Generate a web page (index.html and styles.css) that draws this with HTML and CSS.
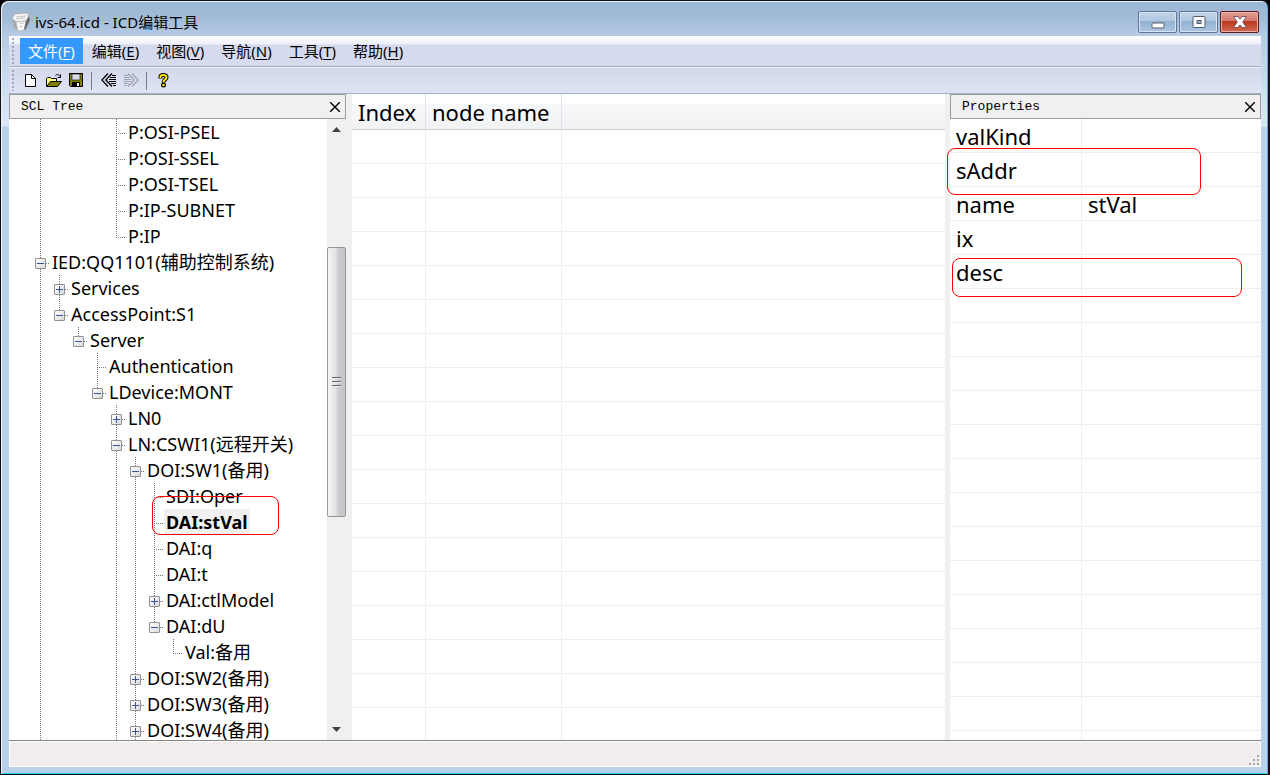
FILE: index.html
```
<!DOCTYPE html>
<html lang="zh-CN">
<head>
<meta charset="utf-8">
<title>ivs-64.icd - ICD编辑工具</title>
<link rel="stylesheet" href="styles.css">
</head>
<body>
<div class="window">
  <header class="titlebar">
    <svg class="app-icon" width="20" height="20" viewBox="0 0 20 20" aria-hidden="true">
      <path d="M1 6 7 10 7 19 3 16Z" fill="#a9a9a9"/>
      <path d="M1 6 4 2 16 1 18 4 15 9 5 10Z" fill="#f6f6f6" stroke="#aaa" stroke-width=".8"/>
      <path d="M5 10 15 9 13 18 7 19Z" fill="#fcfcfc" stroke="#bbb" stroke-width=".8"/>
      <path d="M15 9 18 4 19 8 15 17 13 18Z" fill="#6d6d6d"/>
      <path d="M5 5 15 4M5 7 14 6M8 12 13 11M8 15 12 14" stroke="#c4c4c4" fill="none"/>
    </svg>
    <h1 class="title">ivs-64.icd - ICD编辑工具</h1>
    <div class="window-buttons">
      <button class="wbtn" type="button" aria-label="最小化"><svg width="14" height="14" viewBox="0 0 14 14"><rect x="1" y="8" width="12" height="5" rx="1" fill="#fff" stroke="#555e6b"/></svg></button>
      <button class="wbtn" type="button" aria-label="最大化"><svg width="14" height="14" viewBox="0 0 14 14"><rect x="1" y="1.500" width="12" height="11" rx="1" fill="#fff" stroke="#555e6b"/><rect x="5" y="5.500" width="4" height="3" fill="#8fb3d6" stroke="#555e6b"/></svg></button>
      <button class="wbtn wbtn-close" type="button" aria-label="关闭"><svg width="14" height="14" viewBox="0 0 14 14"><path d="M.5 1.500H5L7 4 9 1.500H13.500L9.800 7 13.500 12.500H9L7 10 5 12.500H.5L4.200 7Z" fill="#fff" stroke="#6b4a4c" stroke-width=".9"/></svg></button>
    </div>
  </header>

  <div class="client">
    <nav class="menubar">
      <span class="grip"></span>
      <button class="menu menu-active" type="button">文件(<u>F</u>)</button>
      <button class="menu" type="button">编辑(<u>E</u>)</button>
      <button class="menu" type="button">视图(<u>V</u>)</button>
      <button class="menu" type="button">导航(<u>N</u>)</button>
      <button class="menu" type="button">工具(<u>T</u>)</button>
      <button class="menu" type="button">帮助(<u>H</u>)</button>
    </nav>
    <div class="toolbar">
      <span class="grip"></span>
      <button class="tool" type="button" aria-label="新建"><svg width="16" height="16" viewBox="0 0 16 16"><path d="M2.500 1.500H8.500L12.500 5.500V13.500H2.500Z" fill="#fff" stroke="#000"/><path d="M8.500 1.500V5.500H12.500" fill="none" stroke="#000"/></svg></button>
      <button class="tool" type="button" aria-label="打开"><svg width="16" height="16" viewBox="0 0 16 16"><path d="M.5 13.500V5.500L1.500 4.500H4.500L5.500 5.500H10.500V8.500" fill="#ffff7a" stroke="#000"/><path d="M.5 13.500 4.500 8.500H15.500L11.500 13.500Z" fill="#808000" stroke="#000"/><path d="M9.500 2.500C11 1 12.500 1 14 3.500M14.500 1.500V4.500H11.500" fill="none" stroke="#000"/></svg></button>
      <button class="tool" type="button" aria-label="保存"><svg width="16" height="16" viewBox="0 0 16 16"><path d="M.5 .5H13.500V13.500H1.500L.5 12.500Z" fill="#808000" stroke="#000"/><path d="M3 1H11V7H3Z" fill="#d8dce6" stroke="#000" stroke-width=".6"/><path d="M3 9H11V14H3Z" fill="#000"/><path d="M8 10H10V13H8Z" fill="#fff"/></svg></button>
      <span class="separator"></span>
      <button class="tool" type="button" aria-label="后退"><svg width="16" height="16" viewBox="0 0 16 16"><path d="M7 .5 .8 7 7 13.500M11 .5 4.800 7 11 13.500" fill="none" stroke="#000" stroke-width="1.300"/><path d="M11 2.500H15M9 4.500H15M8 6.500H15M8 8.500H15M10 10.500H15M12 12.500H15" stroke="#000"/></svg></button>
      <button class="tool" type="button" aria-label="前进" disabled><svg width="16" height="16" viewBox="0 0 16 16"><path d="M8 .5 14.200 7 8 13.500M4 .5 10.200 7 4 13.500" fill="none" stroke="#a0a3ad" stroke-width="1.300"/><path d="M0 2.500H4M0 4.500H6M0 6.500H7M0 8.500H7M0 10.500H5M0 12.500H3" stroke="#a0a3ad"/></svg></button>
      <span class="separator"></span>
      <button class="tool" type="button" aria-label="帮助"><svg width="16" height="16" viewBox="0 0 16 16"><path d="M4.500 5.500V3.500C4.500 2 6 2 7.500 2S10.500 2.500 10.500 4.500C10.500 6.500 7.500 6.500 7.500 9.500" fill="none" stroke="#000" stroke-width="4"/><path d="M4.500 5V3.500C4.500 2 6 2 7.500 2S10.500 2.500 10.500 4.500C10.500 6.500 7.500 6.500 7.500 9" fill="none" stroke="#ffed00" stroke-width="2"/><circle cx="7.500" cy="12" r="2.500"/><circle cx="7.500" cy="12" r="1.300" fill="#ffed00"/></svg></button>
    </div>

    <main class="panes">
      <section class="pane tree-pane">
        <div class="pane-head"><h2 class="pane-title">SCL Tree</h2><button class="pane-close" type="button" aria-label="关闭"><svg width="10" height="10" viewBox="0 0 10 10"><path d="M0 0 10 10M10 0 0 10" stroke="#000" stroke-width="1.400"/></svg></button></div>
        <div class="tree-body">
          <ul class="tree">
            <li class="node"><i class="v"></i><i></i><i></i><i></i><i class="v h"></i><span class="label">P:OSI-PSEL</span></li>
            <li class="node"><i class="v"></i><i></i><i></i><i></i><i class="v h"></i><span class="label">P:OSI-SSEL</span></li>
            <li class="node"><i class="v"></i><i></i><i></i><i></i><i class="v h"></i><span class="label">P:OSI-TSEL</span></li>
            <li class="node"><i class="v"></i><i></i><i></i><i></i><i class="v h"></i><span class="label">P:IP-SUBNET</span></li>
            <li class="node"><i class="v"></i><i></i><i></i><i></i><i class="end h"></i><span class="label">P:IP</span></li>
            <li class="node"><i class="v h"><button class="box" type="button" aria-label="折叠"></button></i><span class="label">IED:QQ1101(辅助控制系统)</span></li>
            <li class="node"><i class="v"></i><i class="v h"><button class="box plus" type="button" aria-label="展开"></button></i><span class="label">Services</span></li>
            <li class="node"><i class="v"></i><i class="end h"><button class="box" type="button" aria-label="折叠"></button></i><span class="label">AccessPoint:S1</span></li>
            <li class="node"><i class="v"></i><i></i><i class="end h"><button class="box" type="button" aria-label="折叠"></button></i><span class="label">Server</span></li>
            <li class="node"><i class="v"></i><i></i><i></i><i class="v h"></i><span class="label">Authentication</span></li>
            <li class="node"><i class="v"></i><i></i><i></i><i class="end h"><button class="box" type="button" aria-label="折叠"></button></i><span class="label">LDevice:MONT</span></li>
            <li class="node"><i class="v"></i><i></i><i></i><i></i><i class="v h"><button class="box plus" type="button" aria-label="展开"></button></i><span class="label">LN0</span></li>
            <li class="node"><i class="v"></i><i></i><i></i><i></i><i class="v h"><button class="box" type="button" aria-label="折叠"></button></i><span class="label">LN:CSWI1(远程开关)</span></li>
            <li class="node"><i class="v"></i><i></i><i></i><i></i><i class="v"></i><i class="v h"><button class="box" type="button" aria-label="折叠"></button></i><span class="label">DOI:SW1(备用)</span></li>
            <li class="node"><i class="v"></i><i></i><i></i><i></i><i class="v"></i><i class="v"></i><i class="v h"></i><span class="label">SDI:Oper</span></li>
            <li class="node"><i class="v"></i><i></i><i></i><i></i><i class="v"></i><i class="v"></i><i class="v h"></i><span class="label selected">DAI:stVal</span><span class="mark mark-node"></span></li>
            <li class="node"><i class="v"></i><i></i><i></i><i></i><i class="v"></i><i class="v"></i><i class="v h"></i><span class="label">DAI:q</span></li>
            <li class="node"><i class="v"></i><i></i><i></i><i></i><i class="v"></i><i class="v"></i><i class="v h"></i><span class="label">DAI:t</span></li>
            <li class="node"><i class="v"></i><i></i><i></i><i></i><i class="v"></i><i class="v"></i><i class="v h"><button class="box plus" type="button" aria-label="展开"></button></i><span class="label">DAI:ctlModel</span></li>
            <li class="node"><i class="v"></i><i></i><i></i><i></i><i class="v"></i><i class="v"></i><i class="end h"><button class="box" type="button" aria-label="折叠"></button></i><span class="label">DAI:dU</span></li>
            <li class="node"><i class="v"></i><i></i><i></i><i></i><i class="v"></i><i class="v"></i><i></i><i class="end h"></i><span class="label">Val:备用</span></li>
            <li class="node"><i class="v"></i><i></i><i></i><i></i><i class="v"></i><i class="v h"><button class="box plus" type="button" aria-label="展开"></button></i><span class="label">DOI:SW2(备用)</span></li>
            <li class="node"><i class="v"></i><i></i><i></i><i></i><i class="v"></i><i class="v h"><button class="box plus" type="button" aria-label="展开"></button></i><span class="label">DOI:SW3(备用)</span></li>
            <li class="node"><i class="v"></i><i></i><i></i><i></i><i class="v"></i><i class="v h"><button class="box plus" type="button" aria-label="展开"></button></i><span class="label">DOI:SW4(备用)</span></li>
          </ul>
          <div class="scrollbar">
            <button class="arrow" type="button" aria-label="向上滚动"><svg width="9" height="5" viewBox="0 0 9 5"><path d="M0 5 4.500 0 9 5Z" fill="#444"/></svg></button>
            <div class="track"><div class="thumb"><span class="ridges"></span></div></div>
            <button class="arrow" type="button" aria-label="向下滚动"><svg width="9" height="5" viewBox="0 0 9 5"><path d="M0 0 4.500 5 9 0Z" fill="#444"/></svg></button>
          </div>
        </div>
      </section>

      <section class="pane list-pane">
        <table class="grid list">
          <colgroup><col class="col-index"><col class="col-node"><col></colgroup>
          <thead><tr><th scope="col">Index</th><th scope="col">node name</th><td></td></tr></thead>
          <tbody>
            <tr><td></td><td></td><td></td></tr><tr><td></td><td></td><td></td></tr>
            <tr><td></td><td></td><td></td></tr><tr><td></td><td></td><td></td></tr>
            <tr><td></td><td></td><td></td></tr><tr><td></td><td></td><td></td></tr>
            <tr><td></td><td></td><td></td></tr><tr><td></td><td></td><td></td></tr>
            <tr><td></td><td></td><td></td></tr><tr><td></td><td></td><td></td></tr>
            <tr><td></td><td></td><td></td></tr><tr><td></td><td></td><td></td></tr>
            <tr><td></td><td></td><td></td></tr><tr><td></td><td></td><td></td></tr>
            <tr><td></td><td></td><td></td></tr><tr><td></td><td></td><td></td></tr>
            <tr><td></td><td></td><td></td></tr><tr><td></td><td></td><td></td></tr>
          </tbody>
        </table>
      </section>

      <section class="pane props-pane">
        <div class="pane-head"><h2 class="pane-title">Properties</h2><button class="pane-close" type="button" aria-label="关闭"><svg width="10" height="10" viewBox="0 0 10 10"><path d="M0 0 10 10M10 0 0 10" stroke="#000" stroke-width="1.400"/></svg></button></div>
        <div class="props-body">
          <table class="grid props">
            <colgroup><col class="col-key"><col></colgroup>
            <tbody>
              <tr><th scope="row">valKind</th><td></td></tr>
              <tr><th scope="row">sAddr</th><td></td></tr>
              <tr><th scope="row">name</th><td>stVal</td></tr>
              <tr><th scope="row">ix</th><td></td></tr>
              <tr><th scope="row">desc</th><td></td></tr>
              <tr><td></td><td></td></tr><tr><td></td><td></td></tr>
              <tr><td></td><td></td></tr><tr><td></td><td></td></tr>
              <tr><td></td><td></td></tr><tr><td></td><td></td></tr>
              <tr><td></td><td></td></tr><tr><td></td><td></td></tr>
              <tr><td></td><td></td></tr><tr><td></td><td></td></tr>
              <tr><td></td><td></td></tr><tr><td></td><td></td></tr>
              <tr><td></td><td></td></tr><tr><td></td><td></td></tr>
            </tbody>
          </table>
        </div>
        <span class="mark mark-saddr"></span>
        <span class="mark mark-desc"></span>
      </section>
    </main>

    <footer class="statusbar">
      <svg width="12" height="12" viewBox="0 0 12 12" aria-hidden="true"><path d="M9 1h2v2H9zM5 5h2v2H5zM9 5h2v2H9zM1 9h2v2H1zM5 9h2v2H5zM9 9h2v2H9z" fill="#aaa"/></svg>
    </footer>
  </div>
</div>
</body>
</html>
```
FILE: styles.css
```
* { box-sizing: border-box; }

body {
  margin: 0;
  background: #000;
  color: #000;
  font-family: "Noto Sans", "Noto Sans CJK SC", sans-serif;
}

h1, h2, ul { margin: 0; padding: 0; font-weight: normal; }
button { padding: 0; border: 0; background: none; color: inherit; font: inherit; }
svg { display: block; }

.window {
  display: flex;
  flex-direction: column;
  height: 100vh;
  padding: 0 6px 7px 7px;
  border: 1px solid #111;
  border-width: 1px 2px 1px 1px;
  border-radius: 8px 8px 0 0;
  background: linear-gradient(#9ab5d2 0, #a3bcd8 18px, #b6cbe4 35px, #cfdff2 90px, #dbe7f6 125px, #b9d1ea 126px);
  box-shadow: inset 1px 1px #e8f2fb, inset -1px -1px #20cfe8;
}

.titlebar {
  display: flex;
  flex: none;
  align-items: center;
  height: 35px;
  padding: 6px 3px 0 3px;
  gap: 4px;
}
.title { flex: 1; font-size: 15px; line-height: 20px; }
.window-buttons { display: flex; align-self: flex-start; gap: 2px; padding-top: 4px; }
.wbtn {
  display: grid;
  place-items: center;
  width: 39px;
  height: 22px;
  border: 1px solid #5f7896;
  border-radius: 2px;
  background: linear-gradient(#c0d3e8 0, #b0c8e1 45%, #92b0d0 46%, #abc6e2 100%);
  box-shadow: inset 0 0 0 1px #d5e4f3;
}
.wbtn-close {
  border-color: #5c1a1c;
  background: linear-gradient(#e0a196 0, #d2796c 45%, #b9381f 46%, #d2694f 100%);
  box-shadow: inset 0 0 0 1px #e8b4a9;
}

.client { display: flex; flex: 1; flex-direction: column; min-height: 0; margin: 0 1px; background: #f0f0f0; }

.menubar, .toolbar { display: flex; flex: none; align-items: center; padding-left: 3px; }
.menubar {
  gap: 1px;
  height: 31px;
  border-bottom: 1px solid #a9acb8;
  background: linear-gradient(#fff 0, #eef0fa 8px, #d4d9ed 9px, #d6dbee 100%);
}
.menubar .grip { margin-right: 5px; }
.toolbar {
  height: 27px;
  border-top: 1px solid #f4f5fb;
  border-bottom: 1px solid #a6b0c9;
  background: linear-gradient(#d2d8eb, #dfe4f5);
}
.grip {
  align-self: stretch;
  width: 2px;
  margin: 2px 5px 2px 0;
  background: linear-gradient(#a3a8ba 2px, transparent 2px) 0 0 / 2px 4px;
}
.menu { height: 26px; padding: 0 8px; font-size: 15px; line-height: 26px; }
.menu-active { background: #3399ff; color: #fff; }
.menu u { text-underline-offset: 2px; }
.tool { display: grid; place-items: center; width: 23px; height: 22px; }
.separator { width: 1px; height: 18px; margin: 0 5px 0 3px; background: #777d8c; }

.panes {
  display: grid;
  flex: 1;
  grid-template-columns: 337px minmax(0, 1fr) 311px;
  gap: 5px;
  min-height: 0;
  border-bottom: 1px solid #858585;
}
.pane { display: flex; flex-direction: column; min-width: 0; min-height: 0; }
.pane-head {
  display: flex;
  flex: none;
  align-items: center;
  justify-content: space-between;
  height: 25px;
  padding: 0 5px 0 11px;
  border: 1px solid #9b9b9b;
  background: #f0f0f0;
}
.pane-title { font-family: "Liberation Mono", monospace; font-size: 13px; line-height: 23px; }

.tree-body { display: flex; flex: 1; min-height: 0; background: #fff; }
.tree { flex: 1; min-width: 0; padding-left: 22px; overflow: hidden; list-style: none; font-size: 18px; }
.node { position: relative; display: flex; height: 26px; line-height: 26px; white-space: nowrap; }
.node i { display: grid; flex: none; place-items: center; width: 19px; height: 26px; padding-top: 2px; }
.node .v, .node .end { background: linear-gradient(#777 1px, transparent 1px) 9px 0 / 1px 2px repeat-y; }
.node .h {
  background:
    linear-gradient(#777 1px, transparent 1px) 9px 0 / 1px 2px repeat-y,
    linear-gradient(90deg, #777 1px, transparent 1px) 9px 14px / 2px 1px repeat-x;
}
.node i.h::before { content: ""; grid-area: 1 / 1; justify-self: start; width: 9px; height: 1px; background: #fff; }
.node i.end::after { content: ""; grid-area: 1 / 1; align-self: end; width: 19px; height: 11px; background: #fff; }
.label { padding: 0 2px; }
.selected { height: 26px; background: #f0f0f0; font-weight: bold; }
.box {
  z-index: 1;
  grid-area: 1 / 1;
  width: 11px;
  height: 11px;
  border: 1px solid #919191;
  border-radius: 1px;
  background:
    linear-gradient(#3a56a0, #3a56a0) center / 7px 1px no-repeat,
    linear-gradient(135deg, #fff, #d9d9d9);
}
.plus {
  background:
    linear-gradient(#3a56a0, #3a56a0) center / 7px 1px no-repeat,
    linear-gradient(#3a56a0, #3a56a0) center / 1px 7px no-repeat,
    linear-gradient(135deg, #fff, #d9d9d9);
}

.scrollbar { display: flex; flex: none; flex-direction: column; width: 19px; background: #f0f0f0; }
.arrow { display: grid; flex: none; place-items: center; height: 21px; }
.track { flex: 1; min-height: 0; padding-top: 107px; }
.thumb {
  display: grid;
  place-items: center;
  height: 270px;
  border: 1px solid #979797;
  border-radius: 2px;
  background: linear-gradient(90deg, #f5f5f5, #e3e3e5 45%, #cbcbd0 60%, #c4c4ca);
}
.ridges { width: 9px; height: 10px; background: linear-gradient(#666 1px, #eee 1px, #eee 2px, transparent 2px) 0 0 / 9px 4px; }

.grid { width: 100%; border-collapse: separate; border-spacing: 0; table-layout: fixed; font-size: 22px; }
.grid th, .grid td {
  height: 34px;
  padding: 0 6px;
  border-right: 1px solid #eee;
  border-bottom: 1px solid #eee;
  font-weight: normal;
  line-height: 30px;
  text-align: left;
  white-space: nowrap;
}
.grid tr > :last-child { border-right: 0; }
.list-pane { margin-left: 1px; overflow: hidden; background: #fff; }
.col-index { width: 74px; }
.col-node { width: 136px; }
.list thead > tr > * {
  height: 36px;
  padding: 1px 6px 0;
  border-right-color: #e2e3e6;
  border-bottom-color: #d0d0d3;
  background: linear-gradient(#fff 9px, #f8f9fa 10px, #f1f2f4 100%);
}

.props-pane { position: relative; }
.props-body { flex: 1; min-height: 0; overflow: hidden; background: #fff; }
.col-key { width: 132px; }

.mark { position: absolute; border: 1px solid #f00; border-radius: 8px; pointer-events: none; }
.mark-node { top: -13px; left: 121px; width: 127px; height: 39px; }
.mark-saddr { top: 54px; left: -3px; width: 254px; height: 47px; }
.mark-desc { top: 164px; left: 2px; width: 290px; height: 39px; }

.statusbar {
  display: flex;
  flex: none;
  align-items: flex-end;
  justify-content: flex-end;
  height: 26px;
  border: 1px solid #fff;
  background: #f0edec;
}
```
